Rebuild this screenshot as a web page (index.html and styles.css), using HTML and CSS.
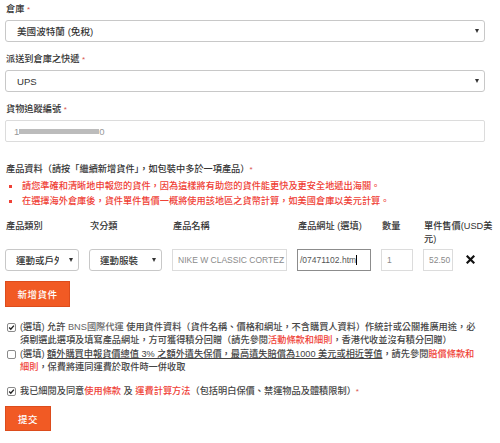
FILE: index.html
```html
<!DOCTYPE html>
<html lang="zh-Hant">
<head>
<meta charset="utf-8">
<title>新增貨件</title>
<link rel="stylesheet" href="styles.css">
</head>
<body>
<form class="form">
  <div class="group">
    <div class="label">倉庫 <span class="req">*</span></div>
    <div class="select"><span>美國波特蘭 (免稅)</span><span class="caret"></span></div>
  </div>
  <div class="group">
    <div class="label">派送到倉庫之快遞 <span class="req">*</span></div>
    <div class="select"><span>UPS</span><span class="caret"></span></div>
  </div>
  <div class="group">
    <div class="label">貨物追蹤編號 <span class="req">*</span></div>
    <div class="input"><span>1</span><span class="redact"></span><span>0</span></div>
  </div>

  <div class="section-title">產品資料（請按「繼續新增貨件」，如包裝中多於一項產品）<span class="req">*</span></div>
  <ul class="notes">
    <li><span class="bullet"></span><span>請您準確和清晰地申報您的貨件，因為這樣將有助您的貨件能更快及更安全地遞出海關。</span></li>
    <li><span class="bullet"></span><span>在選擇海外倉庫後，貨件單件售價一概將使用該地區之貨幣計算，如美國倉庫以美元計算。</span></li>
  </ul>

  <div class="items-head">
    <div>產品類別</div>
    <div>次分類</div>
    <div>產品名稱</div>
    <div>產品網址 (選填)</div>
    <div>數量</div>
    <div class="nowrap">單件售價(USD美<br>元)</div>
  </div>
  <div class="items-row">
    <div class="cell-select"><span class="clip">運動或戶外</span><span class="caret"></span></div>
    <div class="cell-select"><span class="clip">運動服裝</span><span class="caret"></span></div>
    <div class="cell-input grey">NIKE W CLASSIC CORTEZ</div>
    <div class="cell-input focus"><span>/07471102.htm</span><span class="text-caret"></span></div>
    <div class="cell-input grey">1</div>
    <div class="cell-input grey">52.50</div>
    <div class="remove">
      <svg width="9" height="9" viewBox="0 0 9 9"><path d="M1.5 1.5 L7.5 7.5 M7.5 1.5 L1.5 7.5" stroke="#111" stroke-width="2.2" stroke-linecap="square"/></svg>
    </div>
  </div>

  <button type="button" class="btn btn-add">新增貨件</button>

  <div class="check first">
    <svg class="box" width="9" height="9" viewBox="0 0 9 9"><rect x="0.5" y="0.5" width="8" height="8" rx="1.5" fill="#fff" stroke="#8a8a8a"/><path d="M2.2 4.6 L3.8 6.3 L6.9 2.6" fill="none" stroke="#222" stroke-width="1.4"/></svg>
    <p class="check-text">(選填) 允許 <span class="muted">BNS國際代運</span> 使用貨件資料（貨件名稱、價格和網址，不含購買人資料）作統計或公關推廣用途，必<br>須剔選此選項及填寫產品網址，方可獲得積分回贈（請先參閱<span class="red">活動條款和細則</span>，香港代收並沒有積分回贈）</p>
  </div>
  <div class="check second">
    <svg class="box" width="9" height="9" viewBox="0 0 9 9"><rect x="0.5" y="0.5" width="8" height="8" rx="1.5" fill="#fff" stroke="#8a8a8a"/></svg>
    <p class="check-text">(選填) <span class="under">額外購買申報貨價總值 3% 之額外遺失保價，最高遺失賠償為1000 美元或相近等值</span>，請先參閱<span class="red">賠償條款和</span><br><span class="red">細則</span>，保費將連同運費於取件時一併收取</p>
  </div>
  <div class="check third">
    <svg class="box" width="9" height="9" viewBox="0 0 9 9"><rect x="0.5" y="0.5" width="8" height="8" rx="1.5" fill="#fff" stroke="#8a8a8a"/><path d="M2.2 4.6 L3.8 6.3 L6.9 2.6" fill="none" stroke="#222" stroke-width="1.4"/></svg>
    <p class="check-text">我已細閱及同意<span class="red">使用條款</span> 及 <span class="red">運費計算方法</span>（包括明白保價、禁運物品及體積限制）<span class="req">*</span></p>
  </div>

  <button type="button" class="btn btn-submit">提交</button>
</form>
</body>
</html>
```

FILE: styles.css
```css
* {
  box-sizing: border-box;
  margin: 0;
  padding: 0;
}

body {
  font-family: "Liberation Sans", "Noto Sans CJK TC", sans-serif;
  font-size: 9.2px;
  font-weight: 500;
  color: #333;
  background: #fff;
}

.form {
  width: 485px;
  padding: 1px 0 0 5px;
}

.group {
  margin-bottom: 9px;
}

.label {
  line-height: 16px;
  margin-bottom: 2px;
  padding-left: 1px;
}

.req {
  color: #d9534f;
  font-size: 8px;
}

.select {
  display: flex;
  align-items: center;
  justify-content: space-between;
  height: 22px;
  border: 1px solid #c8c8c8;
  border-radius: 3px;
  padding: 0 5px 0 11px;
  font-size: 9.6px;
  color: #333;
  background: #fff;
}

.caret {
  flex: none;
  width: 0;
  height: 0;
  border-left: 2.5px solid transparent;
  border-right: 2.5px solid transparent;
  border-top: 4px solid #333;
}

.input {
  display: flex;
  align-items: center;
  height: 22px;
  border: 1px solid #dcdcdc;
  border-radius: 2px;
  padding-left: 8px;
  color: #999;
  font-size: 9.5px;
}

.redact {
  display: inline-block;
  width: 80px;
  height: 5px;
  background: #bcbcbc;
}

.section-title {
  margin-top: 19px;
  line-height: 16px;
  padding-left: 1px;
}

.notes {
  list-style: none;
  color: #ef4136;
  margin-top: 1px;
}

.notes li {
  display: flex;
  align-items: center;
  gap: 10px;
  line-height: 15px;
  padding-left: 4px;
}

.bullet {
  flex: none;
  width: 3px;
  height: 3px;
  background: #ef4136;
}

.items-head {
  display: grid;
  grid-template-columns: 74px 73px 115px 74px 32px 1fr;
  column-gap: 10px;
  margin-top: 11px;
  line-height: 13px;
  padding-left: 1px;
}

.nowrap {
  white-space: nowrap;
}

.items-row {
  display: grid;
  grid-template-columns: 74px 73px 115px 74px 32px 30px 1fr;
  column-gap: 10px;
  margin-top: 3px;
  height: 22px;
}

.cell-select {
  display: flex;
  align-items: center;
  justify-content: space-between;
  border: 1px solid #c8c8c8;
  border-radius: 3px;
  padding: 0 5px 0 10px;
  font-size: 9.5px;
  color: #333;
  overflow: hidden;
}

.clip {
  width: 43px;
  overflow: hidden;
  white-space: nowrap;
}

.cell-input {
  display: flex;
  align-items: center;
  border: 1px solid #dcdcdc;
  padding-left: 5px;
  font-size: 8.5px;
  font-weight: 400;
  white-space: nowrap;
  overflow: hidden;
}

.cell-input.grey {
  color: #8a8a8a;
}

.cell-input.focus {
  border-color: #8c8c8c;
  color: #555;
  padding-left: 2px;
}

.text-caret {
  display: inline-block;
  width: 1px;
  height: 10px;
  background: #000;
}

.remove {
  display: flex;
  align-items: center;
  padding-left: 3px;
  padding-bottom: 2px;
}

.btn {
  display: block;
  height: 26px;
  border: 1px solid #dc4c1c;
  background: #f15a24;
  color: #fff;
  font-family: "Liberation Sans", "Noto Sans CJK TC", sans-serif;
  font-size: 9.5px;
  font-weight: 500;
  letter-spacing: 0.5px;
}

.btn-add {
  width: 65px;
  margin-top: 10px;
}

.check {
  display: flex;
  align-items: flex-start;
  gap: 4px;
  padding-left: 2px;
  line-height: 13px;
}

.check .box {
  flex: none;
  margin-top: 2px;
}

.check.first {
  margin-top: 14px;
}

.check.second {
  margin-top: 1px;
}

.check.third {
  margin-top: 11px;
}

.check-text {
  color: #444;
}

.muted {
  color: #666;
}

.red {
  color: #ef4136;
}

.under {
  text-decoration: underline;
}

.btn-submit {
  width: 46px;
  height: 25px;
  margin-top: 8px;
}
```
